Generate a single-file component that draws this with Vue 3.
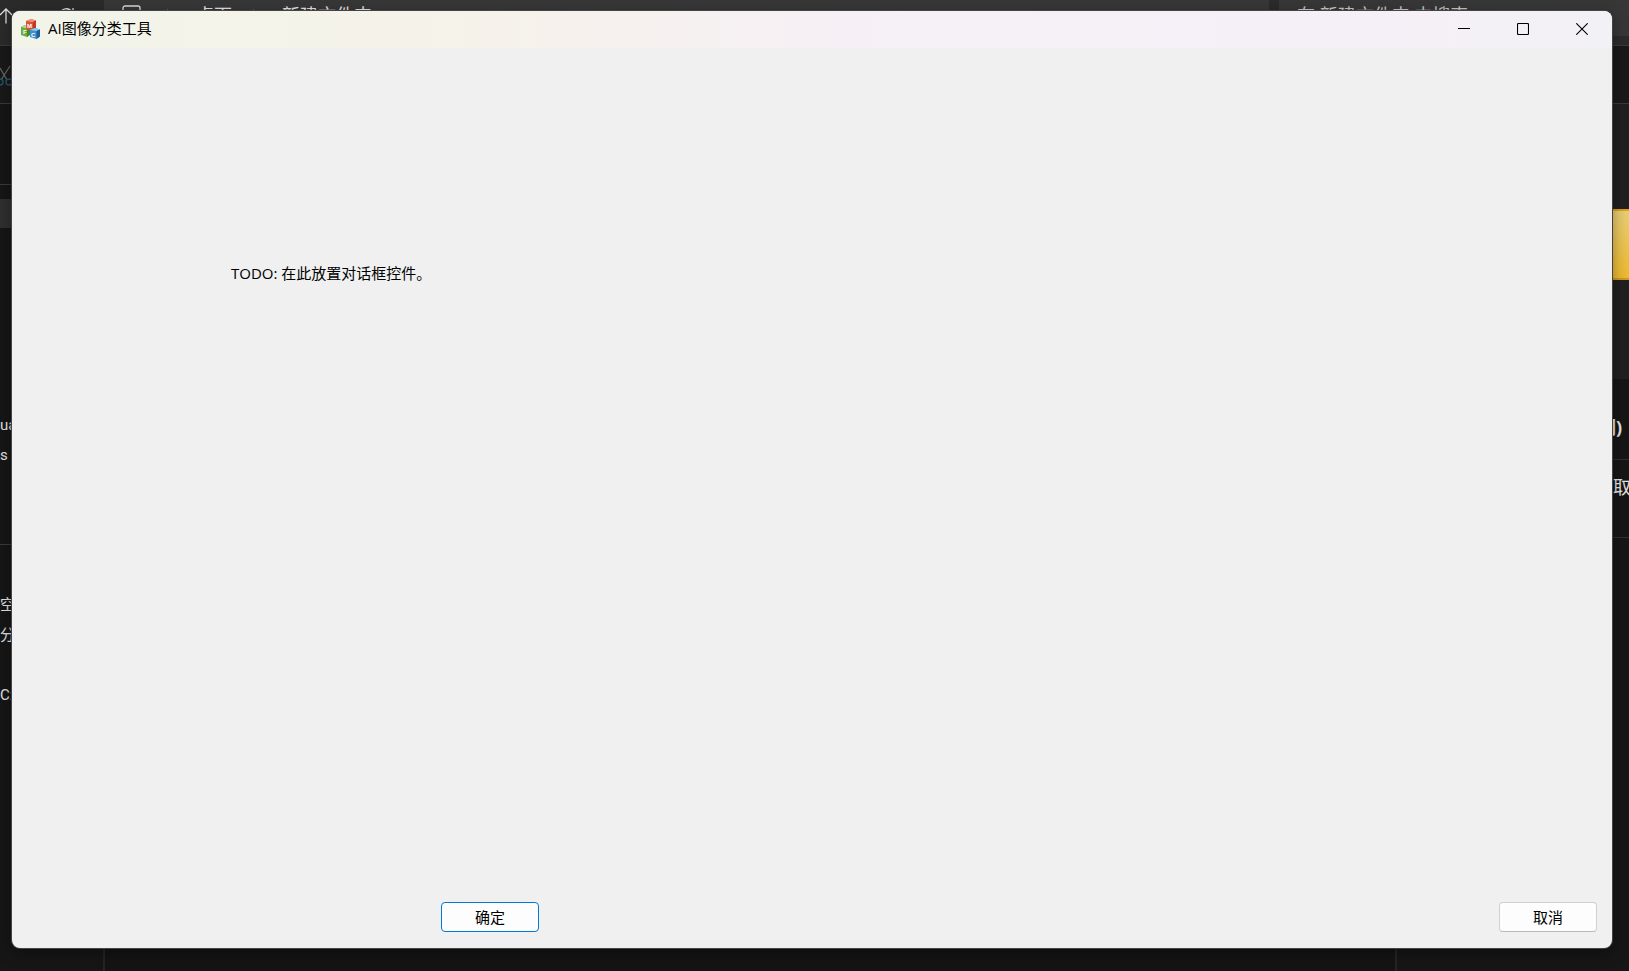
<script setup>
const treeItems = [
  { id: 0, label: 'ua' },
  { id: 1, label: 's' },
  { id: 2, label: '' },
  { id: 3, label: '' },
  { id: 4, label: '', divided: true },
  { id: 5, label: '' },
  { id: 6, label: '空' },
  { id: 7, label: '分' },
  { id: 8, label: '' },
  { id: 9, label: 'C:)' },
]
</script>

<template>
  <div class="desktop">
    <div class="explorer">
      <header class="nav">
        <div class="nav-tools">
          <svg class="up" width="14" height="16" viewBox="0 0 14 16"><path d="M6 15.500V1M0 7l6-6 6 6" /></svg>
          <svg class="reload" width="16" height="16" viewBox="0 0 16 16"><path d="M1 6a6.500 6.500 0 0 1 12-2M14 0v4.500h-5" /></svg>
        </div>
        <div class="address">
          <svg class="monitor" width="20" height="18" viewBox="0 0 20 18"><rect x="1" y="1" width="17" height="12" rx="2" /><path d="M6 17h8" /></svg>
          <svg class="chevron" width="6" height="10" viewBox="0 0 6 10"><path d="M1 1l4 4-4 4" /></svg>
          <span class="crumb">桌面</span>
          <svg class="chevron" width="6" height="10" viewBox="0 0 6 10"><path d="M1 1l4 4-4 4" /></svg>
          <span>新建文件夹</span>
        </div>
        <div class="search">在 新建文件夹 中搜索</div>
      </header>
      <div class="commands">
        <svg width="13" height="22" viewBox="0 0 13 22">
          <path class="blade" d="M0 3l7 12M10 1L1 15" />
          <circle class="ring" cx="0" cy="17" r="3" />
          <circle class="ring" cx="9" cy="17" r="3" />
        </svg>
      </div>
      <div class="columns">
        <aside class="tree">
          <div class="tree-top"></div>
          <div class="tree-selected"></div>
          <ul class="tree-list">
            <li v-for="item in treeItems" :key="item.id" :class="{ divided: item.divided }">
              <span>{{ item.label }}</span>
            </li>
          </ul>
        </aside>
        <div class="files"></div>
        <aside class="details">
          <div class="preview"><div class="folder"></div></div>
          <div class="detail-name">(空间)</div>
          <div class="detail-info">获取</div>
        </aside>
      </div>
    </div>

    <section class="dialog" role="dialog" aria-labelledby="dialog-title">
      <header class="titlebar">
        <svg class="logo" width="20" height="20" viewBox="0 0 20 20" aria-hidden="true">
          <path d="M0 8l4-2 6 2v7l-4 3-6-2z" fill="#6dab3f" />
          <path d="M0 8l4-2 6 2-4 1.500z" fill="#b4d68a" />
          <path d="M6 9.500L10 8v7l-4 3z" fill="#3f8a2c" />
          <path d="M5 2l5-2 5 1.500v8L11 11.500 5 10z" fill="#dd5238" />
          <path d="M5 2l5-2 5 1.500-4 1.500z" fill="#f0957c" />
          <path d="M12 3l3-1.500v8l-3 1.500z" fill="#c03a28" />
          <path d="M9 11l5-2 5 1.500v7L15.500 20 9 18z" fill="#3c90d0" />
          <path d="M9 11l5-2 5 1.500-3.500 1.500z" fill="#8fcaf0" />
          <path d="M15.500 12l3.500-1.500v7L15.500 20z" fill="#1b5f9f" />
          <text x="6" y="9">M</text>
          <text x="2" y="15">F</text>
          <text x="10" y="18">C</text>
        </svg>
        <h1 id="dialog-title">AI图像分类工具</h1>
        <div class="window-actions">
          <button type="button" aria-label="最小化">
            <svg width="12" height="12" viewBox="0 0 12 12"><path d="M0 5.500h12" /></svg>
          </button>
          <button type="button" aria-label="最大化">
            <svg width="12" height="12" viewBox="0 0 12 12"><rect x=".5" y=".5" width="11" height="11" rx="1" /></svg>
          </button>
          <button type="button" aria-label="关闭">
            <svg width="12" height="12" viewBox="0 0 12 12"><path d="M.3.3l11.400 11.400M11.700.3L.3 11.700" /></svg>
          </button>
        </div>
      </header>
      <main class="content"><p>TODO: 在此放置对话框控件。</p></main>
      <footer class="actions">
        <button type="button" class="primary">确定</button>
        <button type="button">取消</button>
      </footer>
    </section>
  </div>
</template>

<style>
html,
body {
  margin: 0;
  background: #141414;
}
</style>

<style scoped>
* {
  box-sizing: border-box;
}

.desktop {
  position: relative;
  display: flex;
  min-height: 100vh;
  padding: 11px 17px 23px 12px;
  overflow: hidden;
  background: #141414;
  font-family: "Open Sans", "Noto Sans CJK SC", sans-serif;
  font-size: 15px;
}

/* File manager behind the dialog */
.explorer {
  position: absolute;
  inset: 0;
  display: flex;
  flex-direction: column;
  overflow: hidden;
  color: #e4e4e4;
}

.explorer svg {
  flex: none;
  fill: none;
  stroke: #dcdcdc;
  stroke-width: 1.3;
}

.nav {
  display: flex;
  flex: none;
  height: 46px;
  border-bottom: 1px solid #3a3a3a;
  background: #2b2b2b;
  font-size: 18px;
  line-height: 20px;
  white-space: nowrap;
}

.nav-tools {
  display: flex;
  gap: 45px;
  width: 104px;
  padding-top: 8px;
}

.address {
  display: flex;
  flex: 1;
  align-items: flex-start;
  height: 36px;
  padding: 5px 18px 0;
  background: #373737;
}

.address .chevron {
  margin: 4px 24px 0 24px;
}

.address .crumb + .chevron {
  margin: 4px 24px 0 20px;
}

.search {
  width: 350px;
  height: 36px;
  margin-left: 10px;
  padding: 5px 18px;
  background: #373737;
  color: #c8c8c8;
}

.commands {
  flex: none;
  height: 58px;
  padding-top: 19px;
  border-bottom: 1px solid #3a3a3a;
  background: #191919;
}

.commands .blade {
  stroke: #666;
}

.commands .ring {
  stroke: #24546f;
}

.columns {
  display: flex;
  flex: 1;
  background: #141414;
}

.tree {
  width: 105px;
  border-right: 2px solid #242424;
  background: #161616;
}

.tree-top {
  height: 81px;
  border-bottom: 1px solid #3a3a3a;
}

.tree-selected {
  height: 29px;
  margin-top: 14px;
  background: #303030;
}

.tree-list {
  margin: 182px 0 0;
  padding: 0;
  font-family: Roboto, "Noto Sans CJK SC", sans-serif;
  list-style: none;
}

.tree-list li {
  display: flex;
  height: 30px;
  line-height: 30px;
}

.tree-list li.divided {
  height: 15px;
  margin-bottom: 15px;
  border-bottom: 1px solid #3a3a3a;
}

.files {
  flex: 1;
}

.details {
  width: 234px;
  border-left: 2px solid #242424;
  background: #161616;
}

.preview {
  height: 275px;
  padding-top: 105px;
  background: #202020;
}

.folder {
  height: 71px;
  border-top: 2px solid #dfa01c;
  border-bottom: 2px solid #cf9820;
  background: linear-gradient(180deg, #e9cd74, #edb92d);
}

.detail-name {
  height: 81px;
  padding: 35px 7px 0 0;
  border-bottom: 1px solid #303030;
  font-size: 18px;
  font-weight: 700;
  line-height: 26px;
  text-align: right;
}

.detail-info {
  height: 78px;
  padding: 14px 0 0 198px;
  border-bottom: 1px solid #303030;
  font-size: 18px;
  line-height: 26px;
  white-space: nowrap;
}

/* Dialog window */
.dialog {
  position: relative;
  display: flex;
  flex: 1;
  flex-direction: column;
  overflow: hidden;
  border-radius: 8px;
  background: #f0f0f0;
  box-shadow: 0 0 0 1px #444, 0 4px 16px rgb(0 0 0 / 40%);
  color: #000;
}

.titlebar {
  display: flex;
  flex: none;
  align-items: center;
  height: 37px;
  padding: 0 1px 2px 9px;
  background: linear-gradient(90deg, #f2f4e9, #f5f3e9 25%, #f6f1ec 34%, #f6f0f7 55%, #f5f0f7 85%, #f2f1f5);
}

.logo {
  flex: none;
}

.logo text {
  fill: #fff;
  font-family: "Liberation Sans", sans-serif;
  font-size: 6px;
  font-weight: 700;
}

h1 {
  flex: 1;
  margin: 0 0 0 7px;
  padding-bottom: 2px;
  font-size: 15px;
  font-weight: 400;
  line-height: 20px;
}

.window-actions {
  display: flex;
}

.window-actions button {
  display: grid;
  place-items: center;
  width: 59px;
  height: 35px;
  padding: 0;
  border: 0;
  background: none;
}

.window-actions svg {
  fill: none;
  stroke: #000;
  stroke-width: 1.100;
}

.content {
  flex: 1;
  padding: 215px 219px 0;
}

.content p {
  margin: 0;
  line-height: 20px;
}

.actions {
  display: flex;
  justify-content: space-between;
  padding: 0 15px 16px 429px;
}

.actions button {
  width: 98px;
  height: 30px;
  padding: 0;
  border: 1px solid #d0d0d0;
  border-bottom-color: #bababa;
  border-radius: 4px;
  background: #fdfdfd;
  color: #000;
  font: inherit;
  line-height: 20px;
}

.actions .primary {
  border-color: #0078d4;
}
</style>
